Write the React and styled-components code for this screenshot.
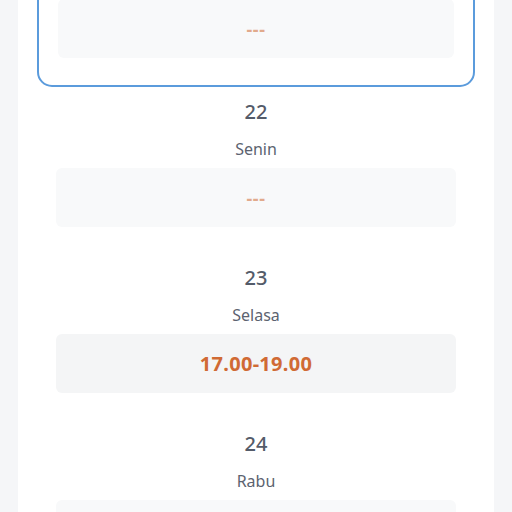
import React from "react";
import styled, { createGlobalStyle } from "styled-components";

const GlobalStyle = createGlobalStyle`
  html, body {
    margin: 0;
    padding: 0;
    background: #f5f6f8;
    font-family: "Noto Sans", "Open Sans", sans-serif;
    overflow: hidden;
  }
`;

const Page = styled.div`
  display: flex;
  justify-content: center;
  min-height: 512px;
`;

const Panel = styled.div`
  width: 476px;
  background: #ffffff;
  padding: 0 19px;
  box-sizing: border-box;
  min-height: 512px;
`;

const List = styled.div`
  display: flex;
  flex-direction: column;
  margin-top: -84px;
`;

const DayCard = styled.div`
  box-sizing: border-box;
  display: flex;
  flex-direction: column;
  align-items: center;
  padding: 11px 19px ${(p) => (p.$selected ? "27px" : "26px")};
  border-radius: 15px;
  border: ${(p) => (p.$selected ? "2px solid #5b9bdc" : "none")};
`;

const DayNumber = styled.div`
  font-size: 20px;
  line-height: 28px;
  font-weight: 500;
  color: #545b69;
`;

const DayName = styled.div`
  margin-top: 11px;
  font-size: 16px;
  line-height: 24px;
  color: #5c6370;
`;

const Slot = styled.div`
  margin-top: 7px;
  align-self: stretch;
  height: 59px;
  border-radius: 6px;
  background: ${(p) => (p.$empty ? "#f8f9fa" : "#f4f5f6")};
  display: flex;
  align-items: center;
  justify-content: center;
`;

const SlotText = styled.span`
  font-size: ${(p) => (p.$empty ? "18px" : "20px")};
  font-weight: 700;
  color: #d06a34;
  opacity: ${(p) => (p.$empty ? 0.55 : 1)};
  letter-spacing: ${(p) => (p.$empty ? "0.6px" : "0.3px")};
`;

const days = [
  { num: "21", name: "Minggu", time: null, selected: true },
  { num: "22", name: "Senin", time: null },
  { num: "23", name: "Selasa", time: "17.00-19.00" },
  { num: "24", name: "Rabu", time: null },
];

export default function App() {
  return (
    <>
      <GlobalStyle />
      <Page>
        <Panel>
          <List>
            {days.map((d) => (
              <DayCard key={d.num} $selected={d.selected}>
                <DayNumber>{d.num}</DayNumber>
                <DayName>{d.name}</DayName>
                <Slot $empty={!d.time}>
                  <SlotText $empty={!d.time}>{d.time || "---"}</SlotText>
                </Slot>
              </DayCard>
            ))}
          </List>
        </Panel>
      </Page>
    </>
  );
}
